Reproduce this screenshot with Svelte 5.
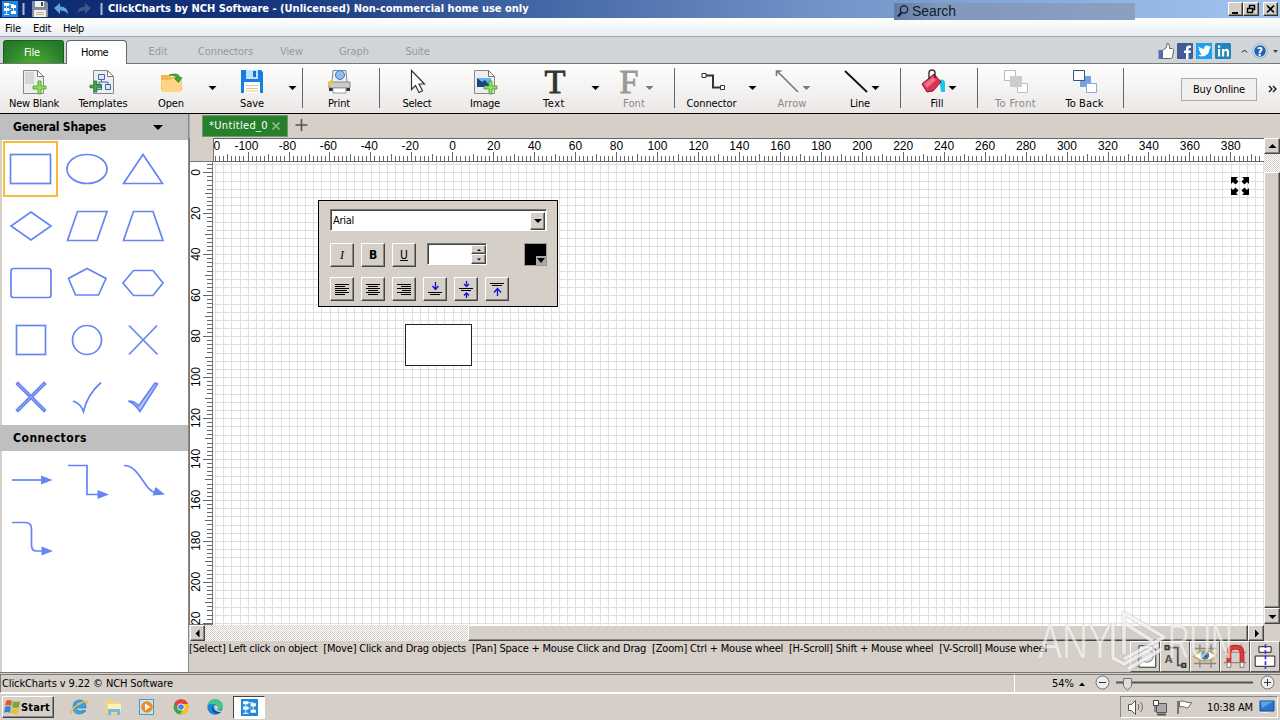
<script>
  function fit(node, width) {
    const natural = node.getBoundingClientRect().width;
    const n = node.textContent.length;
    if (n > 0) node.style.letterSpacing = (width - natural) / n + 'px';
  }

  const tools = [
    { id: 'blank', label: 'New Blank', w: 68, tw: 50 },
    { id: 'templates', label: 'Templates', w: 70, tw: 49 },
    { id: 'open', label: 'Open', w: 66, tw: 26, gap: 16 },
    { id: 'save', label: 'Save', w: 64, tw: 24, gap: 16 },
    { sep: true, w: 4 },
    { id: 'print', label: 'Print', w: 70, tw: 22 },
    { sep: true, w: 10 },
    { id: 'select', label: 'Select', w: 66, tw: 29 },
    { id: 'image', label: 'Image', w: 70, tw: 30 },
    { id: 'text', label: 'Text', w: 68, tw: 22, gap: 14 },
    { id: 'font', label: 'Font', w: 64, tw: 22, off: true, gap: 2 },
    { sep: true, w: 12 },
    { id: 'connector', label: 'Connector', w: 63, tw: 50, gap: 17 },
    { id: 'arrow', label: 'Arrow', w: 64, tw: 29, off: true },
    { id: 'line', label: 'Line', w: 72, tw: 20 },
    { sep: true, w: 8 },
    { id: 'fill', label: 'Fill', w: 66, tw: 13 },
    { sep: true, w: 14 },
    { id: 'front', label: 'To Front', w: 63, tw: 41, off: true },
    { id: 'back', label: 'To Back', w: 75, tw: 38 },
    { sep: true, w: 2 }
  ];

  const tabs = [
    { t: 'Edit', w: 62, tw: 19 },
    { t: 'Connectors', w: 73, tw: 55 },
    { t: 'View', w: 59, tw: 23 },
    { t: 'Graph', w: 66, tw: 30 },
    { t: 'Suite', w: 61, tw: 24 }
  ];

  const unit = 40.95 / 20;
  const hTicks = [];
  for (let v = -116; v <= 394; v += 2) {
    hTicks.push({ v, x: Math.round(239.3 + v * unit) + 0.5, h: v % 20 === 0 ? 9 : v % 10 === 0 ? 7 : 5 });
  }
  const hLabels = [];
  for (let v = -100; v <= 380; v += 20) hLabels.push({ v, x: 239.7 + v * unit });
  const vTicks = [];
  for (let v = -4; v <= 220; v += 2) {
    vTicks.push({ v, y: Math.round(10.3 + v * unit) + 0.5, h: v % 20 === 0 ? 9 : v % 10 === 0 ? 7 : 5 });
  }
  const vLabels = [];
  for (let v = 0; v <= 200; v += 20) vLabels.push({ v, y: 10.3 + v * unit });

  const gx = [];
  for (let k = 0; k < 129; k++) gx.push(Math.round(2 + k * 8.19) + 0.5);
  const gy = [];
  for (let k = 0; k < 57; k++) gy.push(Math.round(2.3 + k * 8.19) + 0.5);

  const shapes = ['rect', 'ellipse', 'tri', 'diamond', 'para', 'trap', 'round', 'penta', 'hexa', 'square', 'circle', 'x', 'fatx', 'check', 'fatcheck'];
  const conns = ['straight', 'elbow', 'curve', 'relbow'];
</script>

{#snippet flow()}
  <rect width="16" height="16" fill="#2388dc" />
  <path d="M2 2h5v3h-5zM9 4h5v3h-5zM2 7h5v3h-5zM9 10h5v3h-5z" fill="#fff" />
  <path d="M4.500 5v8M2 13.500h5M7 3.500h4.500v1M11.500 7v3M7 8.500h2" stroke="#d6edff" fill="none" />
{/snippet}

{#snippet page()}
  <path d="M1.500 .5h14l6 6v17h-20z" fill="#eee" stroke="#888" />
  <path d="M15.500 .5v6h6z" fill="#fff" stroke="#777" />
{/snippet}

{#snippet plus()}
  <path d="M5 0h3v5h5v3H8v5H5V8H0V5h5z" fill="#8ee05a" stroke="#3d9a2a" stroke-width=".8" />
{/snippet}

<div class="app">
  <div class="title">
    <svg class="quick" width="106" height="18" viewBox="0 0 106 18">
      <g transform="translate(2 1)">{@render flow()}</g>
      <path d="M23.500 3v12M101.500 3v12" stroke="#a9bbdb" stroke-width="2" />
      <path d="M32 1h14l2 2v14H32z" fill="#7d8da5" /><path d="M35 1h9v6h-9zM34 10h12v7H34z" fill="#f3eee6" /><path d="M41 2h2v4h-2z" fill="#445" /><path d="M36 12.500h8M36 14.500h8" stroke="#c7a98b" />
      <path d="M54 8l6-5v3.500q8 0 8 8-2-4-8-4V14z" fill="#5aa5e8" />
      <path d="M91 8l-6-5v3.500q-7 0-8 7 2-3 8-3V14z" fill="#3d5587" />
    </svg>
    <span class="name" use:fit={420}>ClickCharts by NCH Software - (Unlicensed) Non-commercial home use only</span>
    <div class="search">
      <svg width="15" height="16" viewBox="0 0 15 16"><circle cx="8" cy="6.500" r="3.700" fill="none" stroke="#101a30" stroke-width="1.300" /><path d="M5.500 9.500L2 13.500" stroke="#101a30" stroke-width="2" /></svg>
      <span use:fit={44}>Search</span>
    </div>
    <div class="winbtns">
      <svg width="15" height="14"><path d="M3 10h6" stroke="#000" stroke-width="2" /></svg>
      <svg width="16" height="14"><path d="M5.500 5V2.500h5v4H9M3.500 5.500h5v4h-5zM5 2.500h6M3 5.500h6" fill="none" stroke="#000" stroke-width="1.400" /></svg>
      <svg class="close" width="15" height="14"><path d="M3 2.500l7 7M10 2.500l-7 7" stroke="#000" stroke-width="1.600" /></svg>
    </div>
  </div>

  <div class="menu"><span use:fit={16}>File</span><span use:fit={18}>Edit</span><span use:fit={21}>Help</span></div>

  <div class="tabs">
    <div class="filetab"><span use:fit={16}>File</span></div>
    <div class="home"><span use:fit={27}>Home</span></div>
    {#each tabs as t}
      <div class="tab" style="width:{t.w}px"><span use:fit={t.tw}>{t.t}</span></div>
    {/each}
    <svg class="social" width="124" height="22" viewBox="1156 40 124 22">
      <path d="M1158.500 50h5v9h-5z" fill="#526fae" />
      <path d="M1162.500 50.500l4-3 .5-4q2.500-.5 2.500 3v2h3q1.500.5 1 2.500l-1 6q-.5 1.500-2 1.500h-8z" fill="#fff" stroke="#666" />
      <rect x="1177" y="43" width="16" height="16" rx="1" fill="#3f5b9a" /><path d="M1186 59v-6h-2v-2.500h2v-2q0-3 3-3h2v2.500h-1.500q-1 0-1 1v1.500h2.500l-.4 2.500h-2.100v6z" fill="#fff" />
      <rect x="1196" y="43" width="16" height="16" fill="#1da1f2" /><path d="M1198 46q3 3 6 3 0-3.500 3-3.500 1.200 0 2 1l2-.7-1.200 1.800 1.200-.2-1.500 1.600q-.5 7-7.500 7.500-2 0-4-1.200 2.500 0 4-1.200-2-.5-2.500-2h1.200q-2-1-2-3l1 .2q-1.500-1.300-.7-3.300z" fill="#fff" />
      <rect x="1215" y="43" width="16" height="16" rx="1.500" fill="#2284bd" /><path d="M1218 49h2.200v7.500h-2.200zM1218 45.500h2.200v2.200h-2.200zM1222 49h2v1q1-1.200 2.500-1.200 2.500 0 2.500 3v4.700h-2.200v-4.300q0-1.500-1.200-1.500-1.400 0-1.400 1.700v4.100H1222z" fill="#fff" />
      <path d="M1242 52.500l2.500-2.500 2.500 2.500" fill="none" stroke="#111" />
      <circle cx="1260" cy="51" r="6.300" fill="#1c62b9" stroke="#fff" /><circle cx="1260" cy="51" r="7.200" fill="none" stroke="#7895b8" stroke-width=".6" />
      <text x="1260" y="55.500" text-anchor="middle" font-size="12" font-weight="bold" fill="#fff">?</text>
      <path d="M1273 50h5l-2.500 3z" fill="#444" />
    </svg>
  </div>

  <div class="toolbar">
    {#each tools as b}
      {#if b.sep}
        <div class="sep" style="width:{b.w}px"><i></i></div>
      {:else}
        <div class="tool" class:off={b.off} style="width:{b.w}px;margin-right:{b.gap ?? 0}px">
          <svg width="26" height="28" viewBox="0 0 26 28">
            {#if b.id === 'blank'}
              <g transform="translate(1 1)">{@render page()}</g><path d="M4 3h9v12H4z" fill="#ccc" opacity=".7" /><g transform="translate(12 12)">{@render plus()}</g>
            {:else if b.id === 'templates'}
              <g transform="translate(2 1)">{@render page()}</g>
              <path d="M8.500 5.500h6v5h-6zM6.500 15.500h5v5h-5zM15.500 15.500h5v5h-5zM11.500 10.500v2.500M9 15.500v-2.500h9v2.500" fill="#d8e8fa" stroke="#41699e" />
              <g transform="translate(0 12) scale(.85)"><path d="M5 0h3v5h5v3H8v5H5V8H0V5h5z" fill="#49a64b" stroke="#187b24" /></g>
            {:else if b.id === 'open'}
              <path d="M3 6h8l2 2h11v13H3z" fill="#f4b94c" /><path d="M3 11h10l2-2h9l-1 14H4z" fill="#ffd585" /><path d="M11 6q10-3 11 3l2-.5-3.500 5-4-4 2.500-.5q-1-2.500-8-3z" fill="#46a52a" stroke="#268221" stroke-width=".7" />
            {:else if b.id === 'save'}
              <path d="M2 1h20l2 2v21H2z" fill="#147ee5" /><path d="M7 1h12v9H7z" fill="#bfe2fb" /><path d="M14 2h3v6h-3z" fill="#1672c4" /><path d="M5 13h16v11H5z" fill="#fff" /><path d="M7 16.500h12M7 19.500h12M7 22h12" stroke="#e1ca87" />
            {:else if b.id === 'print'}
              <path d="M7 1.500h13l1 12H6z" fill="#e8f1fb" stroke="#888" /><circle cx="14" cy="6" r="4.500" fill="#90baf0" stroke="#4279c2" /><path d="M3 13h21v6H3z" fill="#ccc" stroke="#888" /><path d="M3 19h21v3H3z" fill="#333" /><path d="M7 19h13v5H7z" fill="#fff" stroke="#999" /><path d="M2 13l5-3v3l-4 4z" fill="#f1c52e" />
            {:else if b.id === 'select'}
              <path d="M7.500 1.500v19l4-4 3.500 7 3.500-1.800-3.500-6.700h5.500z" fill="#fff" stroke="#333" stroke-width="1.200" />
            {:else if b.id === 'image'}
              <g transform="translate(1 1)">{@render page()}</g><path d="M5 9h14v9H5z" fill="#63b7f0" /><path d="M5 18V9l5 4 3-2 6 7z" fill="#194481" /><g transform="translate(12 12)">{@render plus()}</g>
            {:else if b.id === 'text' || b.id === 'font'}
              <text x={b.id === 'text' ? 14 : 8} y="24" text-anchor="middle" class="serif" textLength={b.id === 'text' ? 21 : 19} lengthAdjust="spacingAndGlyphs">{b.id === 'text' ? 'T' : 'F'}</text>
            {:else if b.id === 'connector'}
              <path d="M6 6.500h8v12h7" fill="none" stroke="#333" stroke-width="2" /><path d="M3 4.500h4v4H3zM21.500 16.500h4v4h-4z" fill="#fff" stroke="#333" />
            {:else if b.id === 'arrow'}
              <path d="M-2 2L19 23M-2.500 7V2h5" fill="none" stroke="#777" stroke-width="1.600" />
            {:else if b.id === 'line'}
              <path d="M-2 2L20 23" stroke="#111" stroke-width="1.800" />
            {:else if b.id === 'fill'}
              <path d="M14 11q7-2 7 3v9h-4l-1-8z" fill="#20c6ed" /><path d="M-2 15L10 5l7 8-8 9-6 1z" fill="#df3155" stroke="#8a1234" /><path d="M0 15l9-7 3 3L3 19z" fill="#ef738a" /><path d="M5 10V4q0-3 3-3t3 3v5" fill="none" stroke="#333" stroke-width="1.400" />
            {:else if b.id === 'front'}
              <path d="M1.500 1.500h11v10h-11zM14.500 14.500h10v9h-10z" fill="#fff" stroke="#bcbcbc" /><path d="M7 7h12v11H7z" fill="#ccc" />
            {:else if b.id === 'back'}
              <path d="M8 7h11v11H8z" fill="#78a1e1" /><path d="M1.500 1.500h11v10h-11z" fill="#fff" stroke="#395384" /><path d="M14.500 14.500h10v9h-10z" fill="#fff" stroke="#89a8db" />
            {/if}
          </svg>
          <span use:fit={b.tw}>{b.label}</span>
        </div>
      {/if}
    {/each}
    <svg class="drops" width="960" height="6" viewBox="0 85 960 6">
      {#each [212, 292, 595, 649, 752, 806, 875, 952] as x}
        <path d="M{x - 3.500} 86h8l-4 4z" fill={x === 649 || x === 806 ? '#777' : '#000'} />
      {/each}
    </svg>
    <div class="buy"><span use:fit={52}>Buy Online</span></div>
    <svg width="10" height="10" viewBox="0 0 10 10"><path d="M1 2l3 3-3 3M5 2l3 3-3 3" fill="none" stroke="#111" stroke-width="1.300" /></svg>
  </div>

  <div class="body">
    <div class="side">
      <div class="head"><span use:fit={93}>General Shapes</span><svg width="10" height="5"><path d="M0 0h10L5 5z" /></svg></div>
      <div class="grid shapes">
        {#each shapes as s, i}
          <div class:sel={i === 0}>
            <svg width="46" height="46" viewBox={i === 0 ? '-22.500 -23 46 46' : '-23 -23 46 46'}>
              {#if s === 'rect'}<rect x="-20" y="-14.500" width="40" height="29" />
              {:else if s === 'ellipse'}<ellipse rx="20" ry="14.500" />
              {:else if s === 'tri'}<path d="M0-14.500L19.500 14.500h-39z" />
              {:else if s === 'diamond'}<path d="M0-14L20 0 0 14-20 0z" />
              {:else if s === 'para'}<path d="M-9.500-14.500h29.500l-10 29h-29.500z" />
              {:else if s === 'trap'}<path d="M-9.500-14.500h19.500l10 29h-39.500z" />
              {:else if s === 'round'}<rect x="-20" y="-14.500" width="40" height="29" rx="2.500" />
              {:else if s === 'penta'}<path d="M0-14.500L19-4.500 11.500 12h-23L-18.500-4.500z" />
              {:else if s === 'hexa'}<path d="M-9.500-12.500h19.500L20 0 10 12.500h-19.500L-20 0z" />
              {:else if s === 'square'}<rect x="-14.500" y="-14.500" width="29" height="29" />
              {:else if s === 'circle'}<circle r="14.500" />
              {:else if s === 'x'}<path d="M-14-14.500l28.500 29M14-14.500l-28 29" />
              {:else if s === 'fatx'}<path class="fat" d="M-13-14.500L0-1.500 13-14.500l1.500 1.500L1.500 0 14.500 13 13 14.500 0 1.500-13 14.500-14.500 13-1.500 0-14.500-13z" />
              {:else if s === 'check'}<path d="M-14 4Q-6 7-3.500 14.500 0-2 14-14.500" />
              {:else}<path class="fat" d="M-14.500 4Q-8 4-4.500 9L12-14l2.500 1L-3 14.500Q-8 7-14.500 4z" />{/if}
            </svg>
          </div>
        {/each}
      </div>
      <div class="head low"><span use:fit={74}>Connectors</span></div>
      <div class="grid conns">
        {#each conns as c}
          <div>
            <svg width="46" height="46" viewBox="-23 -23 46 46">
              {#if c === 'straight'}<path d="M-19 0h32" /><path class="tip" d="M10-4.500L21.500 0 10 4.500z" />
              {:else if c === 'elbow'}<path d="M-19-14.500H0v29h14" /><path class="tip" d="M10.500 10l11.500 4.500-11.500 4.500z" />
              {:else if c === 'curve'}<path d="M-19-14.500C-3-14.500 1 11 13 13" /><path class="tip" d="M12.500 7L22 14.500 9.500 15.500z" />
              {:else}<path d="M-19-14.500h13Q.5-14.500.5-8V8q0 6 5 6h8" /><path class="tip" d="M10.500 9.500L22 14l-11.500 4.500z" />{/if}
            </svg>
          </div>
        {/each}
      </div>
    </div>

    <div class="main">
      <div class="docs">
        <div class="doc"><span use:fit={59}>*Untitled_0</span><svg width="8" height="8"><path d="M.5.5l7 7M7.500.5l-7 7" stroke="#8dbb8d" stroke-width="1.600" /></svg></div>
        <svg width="13" height="13"><path d="M6.500 0v12M.5 6h12" stroke="#555" stroke-width="1.600" /></svg>
      </div>
      <div class="work">
        <div class="corner"></div>
        <svg class="hruler" width="1051" height="24" viewBox="0 0 1051 24">
          <path d="M0 .5h1051M0 23.500h1051" stroke="#666" /><path d="M.5 0v24" stroke="#777" />
          {#each hTicks as t}<path d="M{t.x} {23 - t.h}v{t.h}" stroke="#666" />{/each}
          {#each hLabels as l}<text x={l.v < 0 ? l.x - 1.500 : l.x} y="12" text-anchor="middle">{l.v}</text>{/each}
          <text x="0.500" y="12">0</text>
        </svg>
        <svg class="vruler" width="24" height="463" viewBox="0 0 24 463">
          <path d="M23.500 0v463M.5 0v463" stroke="#777" /><path d="M0 462.500h24" stroke="#777" />
          {#each vTicks as t}<path d="M{23 - t.h} {t.y}h{t.h}" stroke="#666" />{/each}
          {#each vLabels as l}<text transform="translate(11 {l.y}) rotate(-90)" text-anchor="middle">{l.v}</text>{/each}
          <text transform="translate(11 463) rotate(-90)">20</text>
        </svg>
        <div class="canvas">
          <svg class="lines" width="1051" height="463" viewBox="0 0 1051 463">
            {#each gx as x}<path d="M{x} 0v463" />{/each}
            {#each gy as y}<path d="M0 {y}h1051" />{/each}
          </svg>
          <svg class="expand" width="20" height="20" viewBox="0 0 20 20"><path d="M1 1h7L6 3l2.500 2.500-3 3L3 6 1 8zM19 1v7l-2-2-2.500 2.500-3-3L14 3l-2-2zM1 19v-7l2 2 2.500-2.500 3 3L6 17l2 2zM19 19h-7l2-2-2.500-2.500 3-3L17 14l2-2z" /></svg>
          <div class="node"></div>
          <div class="fmt">
            <div class="combo"><span use:fit={21}>Arial</span><svg width="15" height="18"><path d="M3 6h8l-4 4z" /></svg></div>
            <div class="frow second">
              <b class="btn it">I</b><b class="btn">B</b><b class="btn un">U</b>
              <div class="spin"><i></i><div><svg width="15" height="9"><path d="M5 5h4L7 3z" /></svg><svg width="15" height="10"><path d="M5 3.500h4L7 5.500z" /></svg></div></div>
              <div class="swatch"><svg width="10" height="9"><path d="M1 2h8L5 7z" /></svg></div>
            </div>
            <div class="frow">
              <svg class="btn" viewBox="0 0 22 22"><path d="M4 6.500h14M4 8.500h10M4 10.500h14M4 12.500h12M4 14.500h14M4 16.500h10" /></svg>
              <svg class="btn" viewBox="0 0 22 22"><path d="M4 6.500h14M6 8.500h10M4 10.500h14M6 12.500h10M4 14.500h14M6 16.500h10" /></svg>
              <svg class="btn" viewBox="0 0 22 22"><path d="M4 6.500h14M8 8.500h10M4 10.500h14M9 12.500h9M4 14.500h14M8 16.500h10" /></svg>
              <svg class="btn" viewBox="0 0 22 22"><path d="M4 14.500h14M6 16.500h10" /><path class="bl" d="M11.500 4v7M8.500 8l3 3.500 3-3.500" /></svg>
              <svg class="btn" viewBox="0 0 22 22"><path d="M4 10.500h14M6 12.500h10" /><path class="bl" d="M11.500 3v4M9 6l2.500 2.500 2.500-2.500M11.500 20v-4M9 17.500l2.500-2.500 2.500 2.500" /></svg>
              <svg class="btn" viewBox="0 0 22 22"><path d="M4 5.500h14M6 7.500h10" /><path class="bl" d="M11.500 18v-7M8 14.500l3.500-4 3.500 4" /></svg>
            </div>
          </div>
        </div>
        <div class="vscroll">
          <svg class="sb" width="16" height="16"><path d="M3.500 9h8l-4-4z" /></svg>
          <div class="track"></div><div class="thumb"></div>
          <svg class="sb" width="16" height="16"><path d="M3.500 6h8l-4 4z" /></svg>
        </div>
      </div>
      <div class="hscroll">
        <svg class="sb" width="15" height="16"><path d="M8.500 3.500v8l-4-4z" /></svg>
        <div class="track"></div><div class="thumb"></div>
        <svg class="sb" width="16" height="16"><path d="M6 3.500v8l4-4z" /></svg>
      </div>
      <div class="hints">
        <div class="hint"><span use:fit={858}>[Select] Left click on object&nbsp; [Move] Click and Drag objects&nbsp; [Pan] Space + Mouse Click and Drag&nbsp; [Zoom] Ctrl + Mouse wheel&nbsp; [H-Scroll] Shift + Mouse wheel&nbsp; [V-Scroll] Mouse wheel</span></div>
        <div class="modes">
          <svg viewBox="0 0 30 30"><path d="M8.500 3.500h14l4 4v19h-18z" fill="#fff" stroke="#222" /><path d="M22.500 3.500v4h4z" fill="#333" /><circle cx="17" cy="14" r="7" fill="#ddd" fill-opacity=".6" stroke="#999" stroke-width="1.500" /><path d="M12 20l-7 6" stroke="#aaa" stroke-width="2.500" /></svg>
          <svg viewBox="0 0 30 30"><path d="M7 5.500h11v19h7" fill="none" stroke="#555" stroke-width="2" /><path d="M4.500 3.500h4v4h-4zM22.500 22.500h4v4h-4z" fill="#999" stroke="#333" stroke-width="1.500" /><text x="4" y="22" font-size="12" font-weight="bold" fill="#555">A</text></svg>
          <svg viewBox="0 0 30 30"><path d="M9.500 2v25M21.500 2v25M3 6.500h24M3 22.500h24" stroke="#888" stroke-width="1.500" /><path d="M3 15q11-12 24-1-11 11-24 1z" fill="#fff" stroke="#c9a858" stroke-width="1.800" /><circle cx="15" cy="14" r="4.500" fill="#3a78ba" /><circle cx="15" cy="14" r="1.700" fill="#14253b" /></svg>
          <svg viewBox="0 0 30 30"><path d="M9.500 2v25M21.500 2v25M3 10.500h24M3 21.500h24" stroke="#a77" stroke-width="1.200" /><path d="M8.500 21v-10q0-6 7-6t7 6v10" fill="none" stroke="#a31d1d" stroke-width="5" /><path d="M8.500 21v-10q0-6 7-6t7 6v10" fill="none" stroke="#e0393b" stroke-width="3.500" /><path d="M6.500 21.500h4v5h-4zM20.500 21.500h4v5h-4z" fill="#fff" stroke="#777" /></svg>
          <svg viewBox="0 0 30 30"><path d="M8.500 4.500h13v6h-13zM4.500 14.500h21v11h-21z" fill="#fff" stroke="#111" /><path d="M15.500 2v26" stroke="#3b2ce0" stroke-width="1.800" stroke-dasharray="4 2" /></svg>
        </div>
      </div>
    </div>
  </div>

  <div class="status">
    <div class="ver"><span use:fit={171}>ClickCharts v 9.22 © NCH Software</span></div>
    <div class="zoombar">
      <span use:fit={22}>54%</span>
      <svg width="203" height="18" viewBox="1077 675 203 18">
        <path d="M1079 686h6l-3-3.500z" />
        <g fill="#eee" stroke="#777"><circle cx="1102.500" cy="682.500" r="6.500" /><circle cx="1267.500" cy="682.500" r="6.500" /></g>
        <path d="M1099 682.500h7M1264 682.500h7M1267.500 679v7" stroke="#333" /><path d="M1116 682.500h137" stroke="#555" stroke-width="2" />
        <path d="M1123.500 678.500h8v8l-4 3.500-4-3.500z" fill="#ddd" stroke="#777" />
      </svg>
    </div>
  </div>

  <div class="task">
    <div class="start"><svg width="18" height="18" viewBox="0 0 18 18"><path d="M3 3q3-2 6 0L8 8q-3-2-6 0z" fill="#e35a2a" /><path d="M10 3q3 2 7 0l-1 6q-4 2-7 0z" fill="#70ac36" /><path d="M2 9q3-2 6 0l-1 6q-3-2-6 0z" fill="#3986ce" /><path d="M9 10q3 2 7 0l-1 5q-4 2-7 0z" fill="#f1bb2a" /></svg><span use:fit={29}>Start</span></div>
    <svg class="apps" width="180" height="24" viewBox="58 695 180 24">
      <path d="M86 711q-3 3-7 3-6 0-6-7t7-7q6 0 6 8H76q1 3 4 3 2 0 3-1zM76 705h6q-1-3-3-3t-3 3z" fill="#39a6e3" stroke="#1879b8" stroke-width=".6" /><path d="M71 714q-1-6 12-12 6-3 4 2" fill="none" stroke="#e8bf43" stroke-width="1.500" />
      <path d="M106 700h6l1 2h7v12h-14z" fill="#f1d67d" /><path d="M108 704h13v7h-13z" fill="#fff1b5" /><path d="M108 709h12v6h-3v-3h-6v3h-3z" fill="#72b9e7" />
      <rect x="139.500" y="699.500" width="14" height="15" fill="#c9e3f6" stroke="#4698cf" /><circle cx="147" cy="707" r="5.800" fill="#f28b1d" /><path d="M145 703.500l5.500 3.500-5.500 3.500z" fill="#fff" />
      <circle cx="181" cy="707" r="7.500" fill="#33a852" /><path d="M174.500 703a7.500 7.500 0 0 1 13.500 1h-7l-3.500 5z" fill="#e64235" /><path d="M188 704a7.500 7.500 0 0 1-8 10.500l3.500-6.500-1-4z" fill="#fbc116" /><circle cx="181" cy="707" r="3.600" fill="#fff" /><circle cx="181" cy="707" r="2.800" fill="#4285f4" />
      <circle cx="215" cy="707" r="7.700" fill="#1686d3" /><path d="M207.500 705q3-6 9-5.500 7 1 6.200 8-1 3-6 2 1.500-6-4-5.500-3 0-5.200 1z" fill="#42c987" /><path d="M213 706q-3 4 2 7 3 1.500 6-1-8 0-8-6z" fill="#0c519b" /><path d="M214 706q2-2 4 1l-1 3 5 1-1 1q-7 0-7-6z" fill="#d5cfc8" />
    </svg>
    <div class="current"><svg width="17" height="17" viewBox="0 0 16 16">{@render flow()}</svg></div>
    <div class="tray">
      <svg width="74" height="20" viewBox="1122 697 74 20">
        <path d="M1129.500 704.500h3l4-4v14l-4-4h-3z" fill="#fff" stroke="#555" /><path d="M1139 704q2 3 0 6M1141.500 702q4 5 0 10" fill="none" stroke="#666" />
        <path d="M1157.500 703.500h10v9h-10z" fill="#aaa" stroke="#555" /><path d="M1154.500 700.500h5v5h-5zM1156 706v6" fill="#fff" stroke="#444" /><path d="M1158 714.500h9" stroke="#555" stroke-width="2" />
        <path d="M1179 701v13" stroke="#777" stroke-width="2" /><path d="M1180.500 701.500q3-1 5 0 3 1.500 7 1l-3 5q-2 1-4-.5-2-1-5 0z" fill="#fff" stroke="#666" />
      </svg>
      <span use:fit={46}>10:38 AM</span>
      <svg width="16" height="14"><path d="M1 1h14v10H1z" fill="#2777d1" stroke="#174b8d" /><path d="M1.500 1.500h13L3 8z" fill="#58a6ea" /><path d="M2 12.500h7" stroke="#eee" /></svg>
    </div>
  </div>

  <svg class="mark" width="216" height="68" viewBox="0 0 216 68">
    <g fill="#fff" fill-opacity=".6" stroke="#999" stroke-opacity=".35" stroke-width=".6" font-size="48"><text transform="translate(2 50) scale(.75 1)">ANY</text><text transform="translate(132 50) scale(.62 1)">RUN</text></g>
    <g fill="none" stroke-linejoin="round"><path d="M88 46V5l40 24-40 22M77 14v36l11 6 34-19M88 15l29 18M92 61l34-20" stroke="#aaa" stroke-opacity=".4" stroke-width="5" /><path d="M88 46V5l40 24-40 22M77 14v36l11 6 34-19M88 15l29 18M92 61l34-20" stroke="#fff" stroke-opacity=".7" stroke-width="3.500" /></g>
  </svg>
</div>

<style>
  :global(body) { margin: 0; overflow: hidden; }
  .app { position: relative; width: 1280px; height: 720px; display: flex; flex-direction: column; background: #d5cfc8; color: #000; font: 11px "DejaVu Sans Condensed", "DejaVu Sans", sans-serif; overflow: hidden; }
  .app * { box-sizing: border-box; }
  span { white-space: nowrap; flex: none; }
  svg { flex: none; display: block; }
  .title { height: 18px; display: flex; align-items: center; background: linear-gradient(90deg, #0b2a70 0, #14337a 20%, #3f62a3 40%, #7295c9 65%, #a2c6ef 100%); color: #fff; }
  .name { font-weight: bold; margin-left: 2px; width: 420px; position: relative; top: -1px; }
  .search { margin: 4px 0 0 366px; width: 241px; height: 17px; position: relative; z-index: 2; display: flex; align-items: center; gap: 1px; padding-left: 2px; background: linear-gradient(90deg, #637ba6, #8197bb 18%, #8ba0c1); color: #101a30; font: 14px "Liberation Sans", sans-serif; }
  .winbtns { margin-left: 93px; display: flex; }
  .winbtns svg { background: #d5cfc8; border: 1px solid; border-color: #fff #333 #333 #fff; box-shadow: inset -1px -1px #888; }
  .winbtns .close { margin-left: 4px; }
  .menu { height: 18px; display: flex; align-items: center; padding: 2px 0 0 5px; background: linear-gradient(#fff, #e9edf2); gap: 12px; }
  .tabs { height: 28px; border-top: 1px solid #a3a8ab; border-bottom: 1px solid #777; background: #d0d5d7; display: flex; align-items: flex-end; padding-left: 3px; }
  .filetab { width: 61px; height: 23px; padding-right: 3px; border: 1px solid #166114; border-bottom: 0; border-radius: 3px 3px 0 0; background: radial-gradient(ellipse at 50% 130%, #57b52f, #2f8a2c 60%, #25782a 85%); color: #fff; display: grid; place-items: center; }
  .home { width: 61px; height: 24px; margin: 0 1px -1px 2px; border: 1px solid #666; border-bottom: 0; border-radius: 4px 4px 0 0; background: #fff; display: grid; place-items: center; padding-right: 4px; }
  .tab { height: 23px; display: grid; place-items: center; color: #999; }
  .social { margin-left: auto; margin-bottom: 1px; }
  .tabs .tab:nth-child(3) { margin-left: -1px; }
  .toolbar { position: relative; height: 50px; display: flex; background: linear-gradient(#fefefe, #ebe8e6); border-bottom: 1px solid #000; }
  .tool { flex: none; display: flex; flex-direction: column; align-items: center; padding-top: 5px; line-height: 13px; }
  .tool svg { overflow: visible; }
  .off { color: #888; }
  .serif { font: 33px "Liberation Serif", serif; fill: #333; stroke: #333; stroke-width: .8px; }
  .off .serif { fill: #999; stroke: #999; }
  .sep { flex: none; display: flex; justify-content: center; padding-top: 4px; }
  .sep i { width: 1px; height: 40px; background: #666; }
  .drops { position: absolute; left: 0; top: 21px; }
  .buy { width: 76px; height: 23px; margin: 14px 11px 0 auto; border: 1px solid #aaa; background: #f2f0ef; display: grid; place-items: center; }
  .buy + svg { margin: 20px 2px 0 0; }
  .body { height: 558px; display: flex; }
  .side { width: 189px; background: #fff; border-left: 2px solid #d5cfc8; border-right: 1px solid #888; }
  .head { margin-left: -2px; height: 26px; background: #bfbfbf; display: flex; align-items: center; justify-content: space-between; padding: 0 25px 0 13px; font-size: 12px; font-weight: bold; }
  .grid { display: grid; grid-template-columns: repeat(3, 56px); grid-auto-rows: 57px; padding-left: 1px; }
  .grid div { display: grid; place-items: center; }
  .grid div svg { fill: none; stroke: #6685f3; stroke-width: 1.7; }
  .grid .tip { fill: #6685f3; stroke: none; }
  .grid .fat { fill: #b4c3fb; }
  .grid .sel { border: 2px solid #f8bb38; width: 55px; height: 56px; }
  .shapes { height: 285px; padding-top: 1px; }
  .grid div:not(.sel) svg { margin: -1px 0 0 -1px; }
  .conns { padding-top: 1px; }
  .main { width: 1091px; display: flex; flex-direction: column; }
  .docs { height: 24px; display: flex; align-items: flex-start; border-left: 1px solid #aaa; padding-left: 12px; }
  .doc { width: 86px; height: 22px; margin-top: 1px; background: #26802b; color: #fff; border: 1px solid #759475; display: flex; align-items: center; justify-content: space-between; padding: 0 7px 1px 6px; }
  .docs > svg { margin: 5px 0 0 7px; }
  .work { height: 487px; display: grid; grid-template-columns: 24px 1051px 16px; grid-template-rows: 24px 463px; }
  .corner { border-bottom: 1px solid #777; border-left: 1px solid #777; }
  .hruler, .vruler { background: #fff; font: 12px "Liberation Sans", sans-serif; }
  .vruler { grid-column: 1; grid-row: 2; }
  .canvas { grid-column: 2; grid-row: 2; position: relative; background: #fff; overflow: hidden; }
  .lines path { stroke: #e0e0e0; }
  .expand { position: absolute; left: 1017px; top: 14px; }
  .node { position: absolute; left: 192px; top: 162px; width: 67px; height: 42px; border: 1px solid #222; background: #fff; }
  .fmt { position: absolute; left: 105px; top: 38px; width: 240px; height: 107px; border: 1px solid #000; background: #d5cfc8; padding: 8px 10px 0 11px; }
  .combo { height: 22px; background: #fff; border: 1px solid; border-color: #777 #fff #fff #777; box-shadow: inset 1px 1px #444; display: flex; align-items: center; justify-content: space-between; padding: 1px 1px 0 2px; }
  .combo svg, .btn, .spin svg, .sb { background: #d5cfc8; border: 1px solid; border-color: #fff #444 #444 #fff; box-shadow: inset -1px -1px #888; }
  .frow { display: flex; gap: 7px; margin-top: 10px; }
  .second { margin-top: 12px; }
  .btn { width: 24px; height: 24px; display: grid; place-items: center; font-size: 12px; }
  .frow svg.btn { stroke: #000; fill: none; }
  .frow svg .bl { stroke: #1111db; stroke-width: 1.300; }
  .it { font: italic 12px "Liberation Serif", serif; }
  .un { font-weight: normal; text-decoration: underline; }
  .spin { margin-left: 4px; width: 60px; height: 22px; display: flex; border: 1px solid; border-color: #777 #fff #fff #777; box-shadow: inset 1px 1px #444; }
  .spin > i { width: 42px; margin: 1px 0 0 1px; background: #fff; }
  .spin > div { padding-top: 1px; }
  .swatch { width: 23px; height: 23px; margin-left: auto; background: #000; border: 1px solid #999; display: flex; align-items: flex-end; justify-content: flex-end; }
  .swatch svg { background: #aaa8a4; }
  .vscroll { grid-column: 3; grid-row: 1 / 3; display: flex; flex-direction: column; }
  .track { background: conic-gradient(#fff 25%, #d5cfc8 0 50%, #fff 0 75%, #d5cfc8 0) 0 0 / 2px 2px; }
  .thumb { background: #d5cfc8; border: 1px solid; border-color: #fff #444 #444 #fff; box-shadow: inset -1px -1px #888; }
  .vscroll .track { height: 18px; }
  .vscroll .thumb { height: 436px; }
  .hscroll { display: flex; height: 16px; padding-left: 1px; }
  .hscroll .track { width: 263px; }
  .hscroll .thumb { width: 780px; }
  .hints { height: 31px; display: flex; justify-content: space-between; }
  .hint { line-height: 15px; width: 860px; }
  .modes { display: flex; }
  .modes svg { width: 30px; height: 31px; border: 1px solid; border-color: #fff #555 #555 #fff; }
  .status { height: 22px; border-top: 1px solid #777; border-bottom: 1px solid #fff; display: flex; padding-top: 1px; gap: 0; }
  .ver { width: 1015px; border: 1px solid; border-color: #777 #fff #fff #777; padding: 2px 0 0 1px; line-height: 14px; }
  .zoombar { flex: 1; border-top: 1px solid #777; border-bottom: 1px solid #fff; display: flex; justify-content: flex-end; gap: 3px; line-height: 18px; }
  .task { height: 26px; display: flex; align-items: center; padding: 0 2px; }
  .start { width: 52px; height: 22px; border: 1px solid; border-color: #fff #444 #444 #fff; box-shadow: inset -1px -1px #888; display: flex; align-items: center; gap: 0; font-weight: bold; }
  .apps { margin-left: 4px; }
  .current { width: 32px; height: 23px; margin-left: -5px; background: #fff; border: 1px solid; border-color: #444 #fff #fff #444; display: grid; place-items: center; }
  .tray { width: 158px; height: 22px; margin-left: auto; border: 1px solid; border-color: #888 #fff #fff #888; display: flex; align-items: center; justify-content: space-between; padding-right: 2px; }
  .tray span { margin-left: 6px; }
  .mark { position: absolute; left: 1036px; top: 608px; font-family: "Liberation Sans", sans-serif; pointer-events: none; }
</style>
